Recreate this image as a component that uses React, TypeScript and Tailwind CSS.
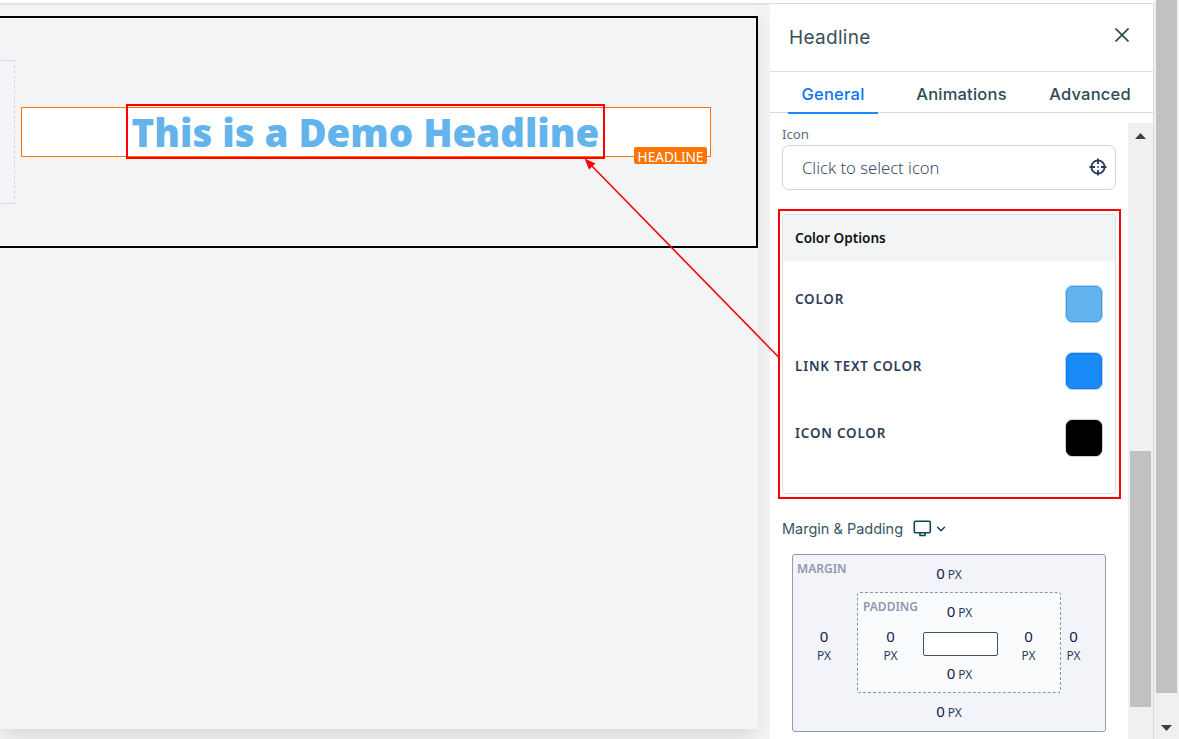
import { ChevronDown } from "lucide-react";

const TABS = [
    { label: "General", active: true, box: "ml-[18px] w-[90px]" },
    { label: "Animations", active: false, box: "ml-[30px] w-[107px]" },
    { label: "Advanced", active: false, box: "ml-[25px] w-[100px]" },
];

const COLORS = [
    { label: "COLOR", swatch: "border-[#2ea3f2] bg-[#63b3ed]" },
    { label: "LINK TEXT COLOR", swatch: "border-[#007bff] bg-[#188bf6]" },
    { label: "ICON COLOR", swatch: "border-black bg-black" },
];

function Value({ stacked = false }: { stacked?: boolean }) {
    if (stacked) {
        return (
            <div className="flex w-8 flex-col items-center text-[#2d3e5f]">
                <span className="text-[15px] leading-[19px] text-[#14224a]">0</span>
                <span className="text-[12px] leading-[19px]">PX</span>
            </div>
        );
    }
    return (
        <div className="flex h-5 items-baseline justify-center gap-[3px] text-[#2d3e5f]">
            <span className="text-[15px] leading-5 text-[#14224a]">0</span>
            <span className="text-[12px] leading-5">PX</span>
        </div>
    );
}

function Canvas() {
    return (
        <main className="h-full w-[770px] shrink-0 overflow-hidden border-t-2 border-[#dfe0e4] bg-[#f3f4f6]">
            <div className="h-[724px] w-[758px] bg-[#f3f4f6] pt-[11px] shadow-[0_10px_20px_-3px_rgba(0,0,0,0.12)]">
                <section className="flex h-[232px] w-[758px] border-y-2 border-r-2 border-black">
                    <div className="mt-[42px] h-[144px] w-[15px] border-y border-r border-dashed border-[#d3d6e6]" />
                    <div className="relative mt-[89px] ml-[6px] flex h-[50px] w-[690px] items-center justify-center border border-[#ff7402] bg-white">
                        <h1 className="w-[469px] font-['Open_Sans',sans-serif] text-[38.4px] leading-[48px] font-extrabold whitespace-nowrap text-[#63b3ed]">
                            This is a Demo Headline
                        </h1>
                        <span className="absolute right-[3px] bottom-[-8px] flex h-[17px] w-[73px] items-center justify-center rounded-[2px] bg-[#ff7402] pt-[3px] font-['Noto_Sans',sans-serif] text-[13.6px] leading-none text-white">
                            HEADLINE
                        </span>
                    </div>
                </section>
            </div>
        </main>
    );
}

function PanelHeader() {
    return (
        <header className="flex h-[68px] items-center justify-between border-b border-[#dcdfe4] pr-[24px] pl-[19px]">
            <h2 className="pt-[2px] font-['Inter',sans-serif] text-[19px] tracking-[0.3px] text-[#37505c]">Headline</h2>
            <svg width="14" height="14" viewBox="0 0 14 14" className="mb-[5px]" fill="none" stroke="#314854" strokeWidth="1.7">
                <path d="M0.5 0.5 13.5 13.5M13.5 0.5 0.5 13.5" />
            </svg>
        </header>
    );
}

function Tabs() {
    return (
        <nav className="flex h-[41px] shrink-0 border-b border-[#d3dbe1] font-['Inter',sans-serif] text-[16.5px] font-[450] tracking-[0.22px]">
            {TABS.map((tab) => (
                <div
                    key={tab.label}
                    className={`${tab.box} flex h-[42px] shrink-0 items-center justify-center whitespace-nowrap ${
                        tab.active ? "border-b-2 border-[#188bf6] pt-[5px] text-[#0b75f5]" : "pt-[3px] text-[#2f4a56]"
                    }`}
                >
                    {tab.label}
                </div>
            ))}
        </nav>
    );
}

function IconField() {
    return (
        <div className="h-[77px]">
            <label className="block h-[32px] pt-[11px] font-['Noto_Sans',sans-serif] text-[13.2px] leading-5 text-[#5d6c79]">Icon</label>
            <div className="flex h-[45px] w-[334px] items-center justify-between rounded-[7px] border border-[#cfd3dc] pr-[8px] pl-[19px]">
                <span className="pt-[2px] font-['Noto_Sans',sans-serif] text-[16.6px] font-light text-[#3d4b66]">Click to select icon</span>
                <svg width="18" height="18" viewBox="0 0 18 18" className="mb-px" fill="none" stroke="#2a3a5c">
                    <circle cx="9" cy="9" r="6.6" strokeWidth="1.8" />
                    <path d="M9 0.5V6M9 12V17.5M0.5 9H6M12 9H17.5" strokeWidth="1.8" />
                    <path d="M8.2 9H9.8" strokeWidth="1.4" />
                </svg>
            </div>
        </div>
    );
}

function ColorOptions() {
    return (
        <section className="mt-[19px] -ml-1 h-[290px] w-[343px] border-2 border-[#ff0000] p-[2px] pt-[3px]">
            <div className="h-[280px] w-[334px] rounded-[3px] border border-[#dcdfe3] font-['Noto_Sans',sans-serif]">
                <h3 className="h-[46px] bg-[#f3f4f6] pl-[12px] text-[13.6px] leading-[46px] font-semibold tracking-[-0.02px] text-[#111]">
                    Color Options
                </h3>
                <div className="pt-[24px] pr-[12px] pl-[12px]">
                    {COLORS.map((color) => (
                        <div key={color.label} className="flex h-[67px] items-start justify-between">
                            <span className="pt-[4px] text-[13.4px] leading-5 font-semibold tracking-[0.83px] text-[#2d3d58]">
                                {color.label}
                            </span>
                            <span className="h-[38px] w-[38px] rounded-[7px] border border-[#cdd0d6]">
                                <span className={`${color.swatch} block h-full w-full rounded-[6px] border`} />
                            </span>
                        </div>
                    ))}
                </div>
            </div>
        </section>
    );
}

function BoxModel() {
    return (
        <section>
            <div className="mt-[19px] flex h-[22px] items-center font-['Inter',sans-serif] text-[14.5px] text-[#3b5560]">
                Margin &amp; Padding
                <svg width="19" height="17" viewBox="0 0 19 17" className="mb-px ml-[10px]" fill="none" stroke="#124553" strokeWidth="1.6">
                    <rect x="1.3" y="1.3" width="16" height="11.4" rx="1.2" />
                    <path d="M7 13V15.5H12V13" />
                </svg>
                <ChevronDown className="ml-[2px] h-3.5 w-3.5 text-[#1f2d50]" strokeWidth={2.4} />
            </div>
            <div className="mt-[14px] ml-[10px] h-[178px] w-[314px] rounded-[3px] border border-[#8e9bb3] bg-[#f2f4f9] font-['Noto_Sans',sans-serif]">
                <div className="grid h-[37px] grid-cols-[64px_1fr_64px]">
                    <span className="pt-[4px] pl-[4px] text-[12px] leading-5 font-semibold text-[#8e9ab1]">MARGIN</span>
                    <div className="pt-[8px]"><Value /></div>
                </div>
                <div className="flex h-[101px]">
                    <div className="flex w-[62px] justify-center pt-[35px]"><Value stacked /></div>
                    <div className="ml-[2px] h-[101px] w-[204px] rounded-[3px] border border-dashed border-[#8993a9] bg-[#fafbfd]">
                        <div className="grid h-[39px] grid-cols-[65px_73px_64px]">
                            <span className="pt-[4px] pl-[5px] text-[12px] leading-5 font-semibold text-[#8e9ab1]">PADDING</span>
                            <div className="pt-[8px]"><Value /></div>
                        </div>
                        <div className="flex h-[25px]">
                            <div className="-mt-[5px] flex w-[65px] justify-center"><Value stacked /></div>
                            <div className="h-[24px] w-[75px] rounded-[2px] border border-[#414e68] bg-white" />
                            <div className="-mt-[5px] flex w-[61px] justify-center"><Value stacked /></div>
                        </div>
                        <div className="w-[203px] pt-[6px]"><Value /></div>
                    </div>
                    <div className="flex w-[25px] justify-center pt-[35px]"><Value stacked /></div>
                </div>
                <div className="pt-[8px]"><Value /></div>
            </div>
        </section>
    );
}

function SidePanel() {
    return (
        <aside className="flex h-full w-[384px] flex-col border-t border-r border-[#dcdde0] bg-white">
            <PanelHeader />
            <Tabs />
            <div className="flex min-h-0 flex-1">
                <div className="w-[358px] pl-[12px]">
                    <IconField />
                    <ColorOptions />
                    <BoxModel />
                </div>
                <div className="mt-[10px] flex w-[25px] flex-col items-center bg-[#f0f0f0] pr-px">
                    <svg width="11" height="6" viewBox="0 0 11 6" className="mt-[10px]" fill="#404040">
                        <path d="M5.5 0 11 6H0Z" />
                    </svg>
                    <div className="mt-[312px] ml-px h-[256px] w-[21px] bg-[#c1c1c1]" />
                </div>
            </div>
        </aside>
    );
}

export default function App() {
    return (
        <div className="relative flex h-[739px] w-[1179px] overflow-hidden bg-white">
            <div className="flex h-full w-[1154px] pt-[3px]">
                <Canvas />
                <SidePanel />
            </div>
            <div className="flex h-full w-[25px] flex-col items-center bg-[#f0f0f0]">
                <div className="h-[693px] w-[21px] bg-[#c1c1c1]" />
                <svg width="11" height="6" viewBox="0 0 11 6" className="mt-[32px]" fill="#404040">
                    <path d="M0 0H11L5.5 6Z" />
                </svg>
            </div>

            {/* Callout linking the colour options to the headline */}
            <div className="absolute top-[104px] left-[126px] h-[55px] w-[479px] border-2 border-[#ff0000]" />
            <svg className="absolute top-[158px] left-[584px]" width="196" height="201" viewBox="0 0 196 201" fill="#ff0000">
                <path d="M5 5 194.5 199" stroke="#ff0000" strokeWidth="1.6" />
                <path d="M0.5 0.5 11.5 5.5 5 11.5Z" />
            </svg>
        </div>
    );
}
